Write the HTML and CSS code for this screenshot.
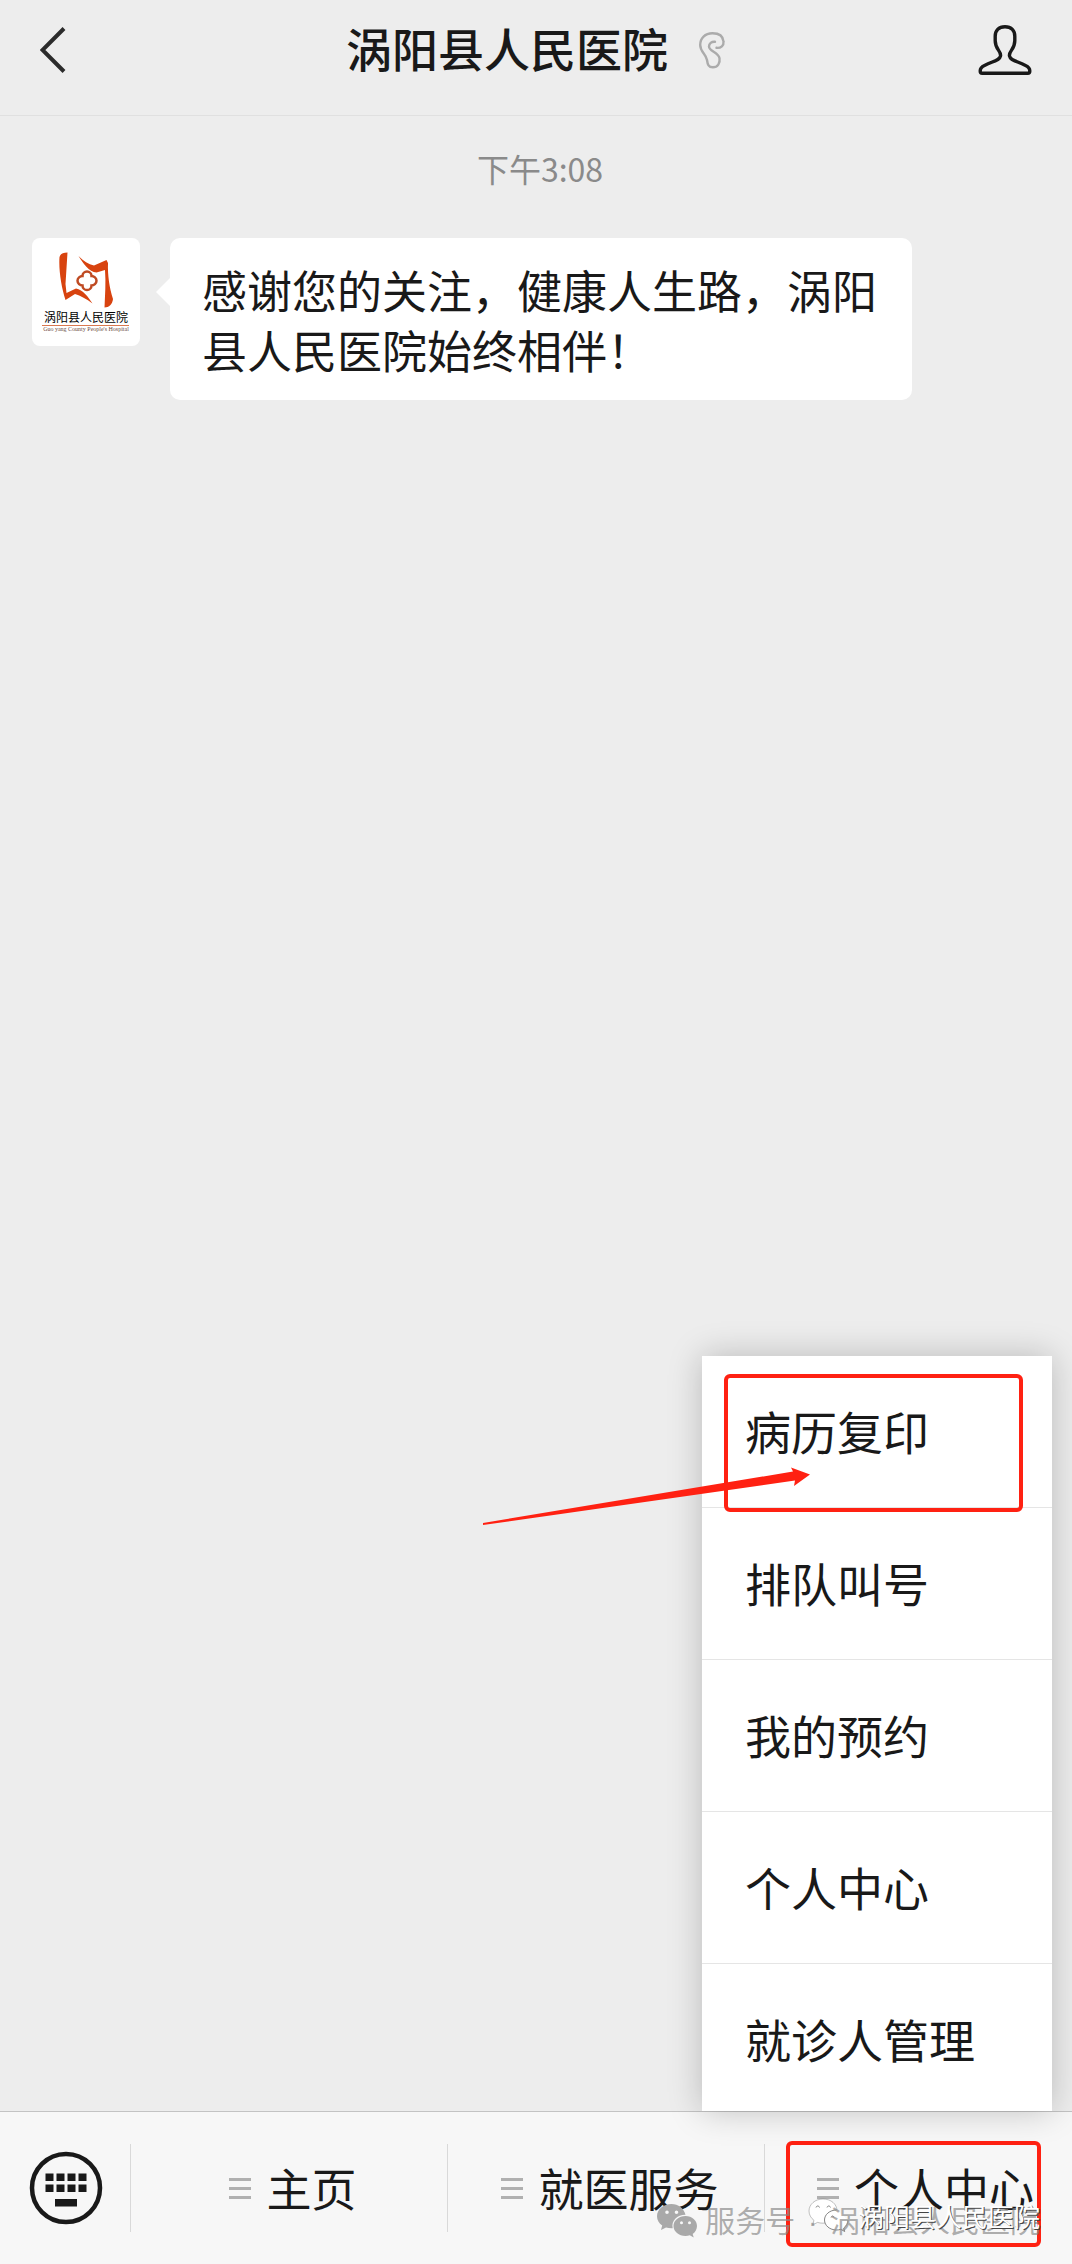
FILE: index.html
```html
<!DOCTYPE html>
<html lang="zh-CN">
<head>
<meta charset="utf-8">
<meta name="viewport" content="width=device-width, initial-scale=1">
<title>涡阳县人民医院</title>
<link rel="stylesheet" href="styles.css">
</head>
<body>
<div class="app">
  <header class="topbar">
    <button class="icon-button" type="button" aria-label="返回">
      <svg width="26" height="46" viewBox="0 0 26 46" fill="none" stroke="#2b2b2b" stroke-width="4"><path d="M24 1.500 2.500 23 24 44.500"/></svg>
    </button>
    <h1 class="title"><span>涡阳县人民医院</span>
      <svg class="ear" width="28" height="38" viewBox="0 0 28 38" fill="none" stroke="#ababab" stroke-width="2.400" stroke-linecap="round"><path d="M18.500 16.800c4.500.5 7.500-2.300 7-6.300C25 5 20.500 2.300 14.500 2.300 7 2.300 2.200 7 2.200 14c0 7 5.800 8.500 6.800 15 .6 4.500 1.500 7.300 5.800 7.300 5 0 7.500-4.300 6.700-9C20.500 21 11 20.500 11 15.500c0-3 2.500-5 6-4.700"/></svg>
    </h1>
    <button class="icon-button" type="button" aria-label="公众号资料">
      <svg width="54" height="50" viewBox="0 0 54 50" fill="none" stroke="#191919" stroke-width="3.400" stroke-linejoin="round"><path d="M27 1.700c-6.500 0-9.800 4-9.800 9.500v4.500c0 9 6.300 10.300 5.300 15.300-.8 4-5 4.300-16 9.500C2.500 42.300 2.200 44 2.200 46c0 1.500.6 2.300 2 2.300h45.600c1.400 0 2-.8 2-2.300 0-2-.3-3.700-4.300-5.500-11-5.200-15.200-5.500-16-9.500-1-5 5.300-6.300 5.300-15.300v-4.500c0-5.500-3.300-9.500-9.800-9.500z"/></svg>
    </button>
  </header>

  <main class="chat">
    <p class="time">下午3:08</p>
    <div class="message">
      <svg class="avatar" viewBox="0 0 108 108" role="img" aria-label="涡阳县人民医院">
        <g fill="#d8430f">
          <path d="M27.500 19c1-3.500 4-4.500 8-4.500L33.500 46l1 9L44 50.500c7 1.500 12 8 16.500 15-6-4.500-12-8-17.500-9.500L33.500 62C29.500 50 26.500 32 27.500 19z"/>
          <path d="M46.500 18c5 5 10 8.500 15.500 9.500L74.500 22 76 25c-.5 12 1.500 25 5 36-.5 5-4 8.500-8.500 8.500.5-12 1.500-25 .5-37.500l-8.500 2.500C57 34 51 25 46.500 18z"/>
        </g>
        <path d="M55 33.500c2.500 0 4.500 2 4.500 4.500 2.500 0 5 2 5 4.700s-2.500 4.700-5 4.700c0 2.600-2 4.600-4.500 4.600s-4.500-2-4.500-4.600c-2.500 0-5-2-5-4.700s2.500-4.700 5-4.700c0-2.500 2-4.500 4.500-4.500z" fill="#fff" stroke="#bf4a22" stroke-width="2.500"/>
        <path d="M10 87.500h87" stroke="#d9774f" stroke-width="1"/>
        <text class="avatar-name" x="54" y="84" text-anchor="middle">涡阳县人民医院</text>
        <text class="avatar-sub" x="54" y="93" text-anchor="middle">Guo yang County People's Hospital</text>
      </svg>
      <p class="bubble">感谢您的关注，健康人生路，涡阳县人民医院始终相伴！</p>
    </div>
    <ul class="menu">
      <li><button class="menu-item" type="button">病历复印</button></li>
      <li><button class="menu-item" type="button">排队叫号</button></li>
      <li><button class="menu-item" type="button">我的预约</button></li>
      <li><button class="menu-item" type="button">个人中心</button></li>
      <li><button class="menu-item" type="button">就诊人管理</button></li>
    </ul>
    <div class="mark mark-menu"></div>
    <svg class="arrow" width="330" height="70" viewBox="0 0 330 70" fill="#ff2112"><path d="M1 64 311 12.500l-2-4 19 7L312 27l1-5.500L1 66z"/></svg>
  </main>

  <footer class="toolbar">
    <button class="keyboard" type="button" aria-label="键盘">
      <svg width="74" height="74" viewBox="0 0 74 74" fill="#191919"><circle cx="37" cy="37" r="34" fill="none" stroke="#191919" stroke-width="4.500"/><path d="M16.500 22.500h8v7.500h-8zM27.500 22.500h8v7.500h-8zM38.500 22.500h8v7.500h-8zM49.500 22.500h8v7.500h-8zM16.500 33.500h8v7.500h-8zM27.500 33.500h8v7.500h-8zM38.500 33.500h8v7.500h-8zM49.500 33.500h8v7.500h-8zM26 48h22v7.500H26z"/></svg>
    </button>
    <nav class="tabs">
      <button class="tab" type="button"><span class="bars"></span>主页</button>
      <button class="tab" type="button"><span class="bars"></span>就医服务</button>
      <button class="tab" type="button"><span class="bars"></span>个人中心</button>
    </nav>
    <div class="mark mark-tab"></div>
    <p class="watermark watermark-outlined">
      <svg width="42" height="36" viewBox="0 0 42 36" fill="#fff" stroke="#666" stroke-width="0.800"><path d="M15 1C7 1 1 6.400 1 13c0 3.800 2 7.100 5 9.400L4.500 27l5-2.600c1.800.5 3.600.8 5.500.8C23 25 29 20 29 13S23 1 15 1z" stroke-opacity="0.500"/><path d="M28.500 12C21.800 12 16.500 16.500 16.500 22s5.300 10 12 10c1.500 0 3-.2 4.300-.7l3.900 2.200-1-3.500c2.600-1.900 4.300-4.800 4.300-8"/><path d="M8 9.500c.5-2 3-2 3.500 0M19 9.500c.5-2 3-2 3.500 0M23 19.500c.5-2 2.500-2 3 0" fill="none"/></svg>
      <span>涡阳县人民医院</span>
    </p>
    <p class="watermark">
      <svg width="40" height="34" viewBox="0 0 40 34" fill="#a9a9a9"><path fill-rule="evenodd" d="M14.500 0C6.500 0 0 5.400 0 12.200c0 3.800 2 7.100 5.200 9.400L4 26l5-2.600c1.800.5 3.600.8 5.500.8h1.200C14 17 20 10.800 28.500 10.800 27 4.500 21.300 0 14.500 0zM10 6.500a1.800 1.800 0 1 1 0 3.600 1.800 1.800 0 0 1 0-3.600zm9.500 0a1.800 1.800 0 1 1 0 3.600 1.800 1.800 0 0 1 0-3.600z"/><path fill-rule="evenodd" d="M28.500 12C21.800 12 16.500 16.500 16.500 22s5.300 10 12 10c1.500 0 3-.2 4.300-.7l3.900 2.200-1-3.500c2.600-1.900 4.300-4.800 4.300-8 0-5.500-5-10-11.500-10zm-4 5.300a1.500 1.500 0 1 1 0 3 1.500 1.500 0 0 1 0-3zm8 0a1.500 1.500 0 1 1 0 3 1.500 1.500 0 0 1 0-3z"/></svg>
      <span>服务号<span class="dot"> · </span>涡阳县人民医院</span>
    </p>
  </footer>
</div>
</body>
</html>
```
FILE: styles.css
```css
* {
  box-sizing: border-box;
}

body {
  margin: 0;
  background: #ededed;
  color: #191919;
  font-family: "Noto Sans CJK SC", "Noto Sans", sans-serif;
}

h1, p, ul {
  margin: 0;
  padding: 0;
}

button {
  border: 0;
  padding: 0;
  background: none;
  color: inherit;
  font: inherit;
  cursor: pointer;
}

svg {
  display: block;
}

.app {
  display: flex;
  flex-direction: column;
  min-height: 100vh;
}

.topbar {
  display: flex;
  align-items: center;
  justify-content: space-between;
  height: 116px;
  padding: 0 40px 16px;
  border-bottom: 1px solid #e0e0e0;
}

.icon-button {
  flex: 1;
  display: flex;
}

.icon-button:last-child {
  justify-content: flex-end;
}

.title {
  display: flex;
  align-items: center;
  gap: 30px;
  font-size: 46px;
  font-weight: 500;
  line-height: 60px;
}

.title span {
  padding-bottom: 6px;
}

/* Sits above the toolbar so that the menu's shadow falls on it */
.chat {
  position: relative;
  z-index: 1;
  flex: 1;
  display: flex;
  flex-direction: column;
}

.time {
  padding: 30px 0 48px 8px;
  color: #8a8a8a;
  font-size: 32px;
  line-height: 44px;
  text-align: center;
}

.message {
  display: flex;
  align-items: flex-start;
  gap: 30px;
  padding: 0 160px 0 32px;
}

.avatar {
  flex: none;
  width: 108px;
  height: 108px;
  border-radius: 8px;
  background: #fff;
}

.avatar-name {
  font-size: 12px;
}

.avatar-sub {
  font-family: "Liberation Serif", serif;
  font-size: 6px;
  fill: #6b4a40;
}

.bubble {
  position: relative;
  flex: 1;
  padding: 22px 30px 20px 32px;
  border-radius: 10px;
  background: #fff;
  font-size: 45px;
  line-height: 60px;
}

.bubble::before {
  content: "";
  position: absolute;
  top: 40px;
  left: -14px;
  border: 14px solid transparent;
  border-left: 0;
  border-right-color: #fff;
}

.menu {
  align-self: flex-end;
  width: 350px;
  margin: auto 20px 0 0;
  background: #fff;
  box-shadow: 0 0 32px rgba(0, 0, 0, 0.22);
  list-style: none;
}

.menu-item {
  display: block;
  width: 100%;
  height: 152px;
  padding: 0 0 4px 43px;
  border-bottom: 1px solid #e5e5e5;
  font-size: 46px;
  line-height: 60px;
  text-align: left;
}

.menu li:last-child .menu-item {
  height: 147px;
  padding-bottom: 0;
  border-bottom: 0;
}

.mark {
  position: absolute;
  border: 4px solid #ff2112;
  border-radius: 6px;
  pointer-events: none;
}

.mark-menu {
  right: 49px;
  bottom: 599px;
  width: 299px;
  height: 138px;
}

.arrow {
  position: absolute;
  right: 260px;
  bottom: 582px;
}

.toolbar {
  position: relative;
  display: flex;
  align-items: center;
  height: 153px;
  border-top: 1px solid #c3c3c3;
  background: #f7f7f7;
}

.keyboard {
  flex: none;
  width: 130px;
  padding-left: 29px;
}

.tabs {
  flex: 1;
  display: grid;
  grid-template-columns: 317px 317px 1fr;
}

.tab {
  display: flex;
  align-items: center;
  justify-content: center;
  gap: 15px;
  height: 88px;
  padding-left: 8px;
  border-left: 1px solid #d9d9d9;
  font-size: 45px;
  line-height: 60px;
}

.tab:last-child {
  padding-left: 14px;
}

.bars {
  width: 22px;
  height: 21px;
  background: linear-gradient(#b0b0b0 3px, transparent 3px 9px, #b0b0b0 9px 12px, transparent 12px 18px, #b0b0b0 18px);
}

.mark-tab {
  right: 31px;
  bottom: 17px;
  width: 255px;
  height: 106px;
}

.watermark {
  position: absolute;
  right: 32px;
  bottom: 22px;
  display: flex;
  align-items: center;
  gap: 8px;
  color: rgba(140, 140, 140, 0.7);
  font-size: 30px;
  line-height: 40px;
  white-space: nowrap;
}

.watermark-outlined {
  bottom: 28px;
  color: #fff;
  font-size: 26px;
  text-shadow: 1px 1px 0 #444;
}

.watermark-outlined span {
  position: relative;
  z-index: 1;
}

.dot {
  margin: 0 4px;
  font-family: "Liberation Sans", sans-serif;
}
```
